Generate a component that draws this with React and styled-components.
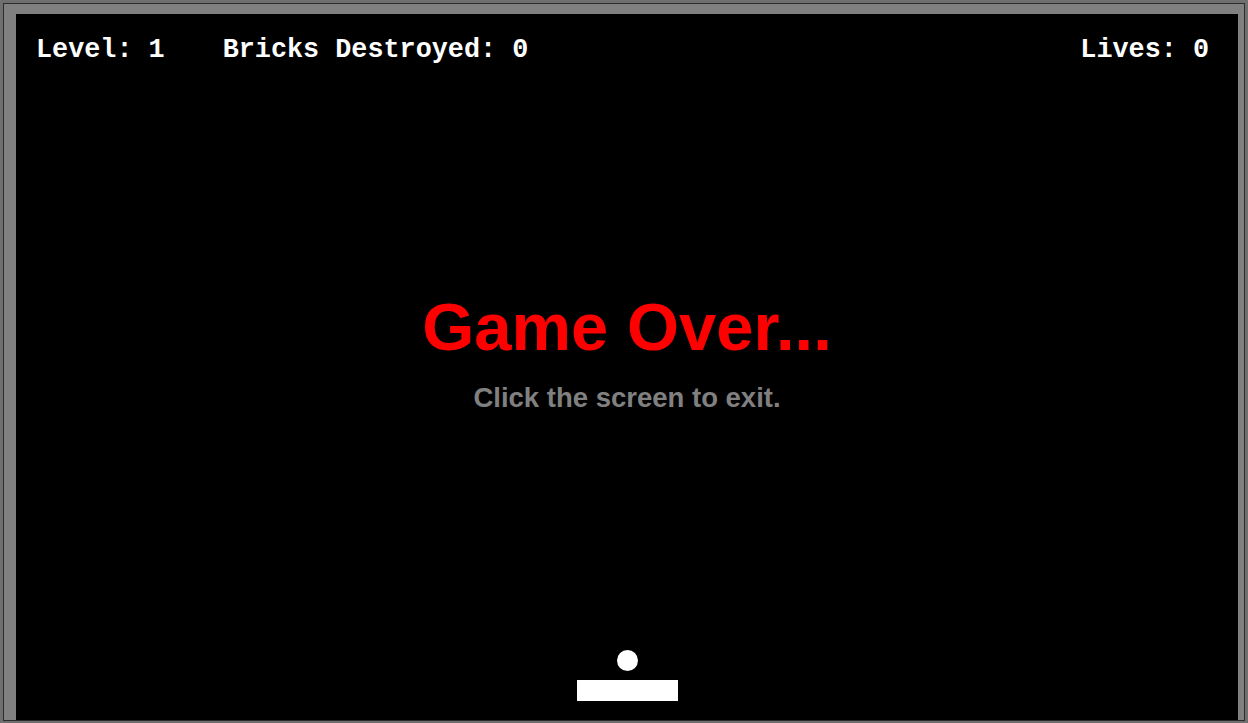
import React from 'react';
import styled, { createGlobalStyle } from 'styled-components';

const GlobalStyle = createGlobalStyle`
    html, body {
        margin : 0;
        padding : 0;
        background : #6f6f6f;
        overflow : hidden;
    }
`;

const Frame = styled.div`
    box-sizing : border-box;
    width : 1242px;
    height : 718px;
    margin : 3px 0 0 3px;
    border : 1px solid #2c2c2c;
    background : #808080;
    padding : 10px 6px 0 12px;
    display : flex;
`;

const Board = styled.div`
    position : relative;
    flex : 1;
    background : #000;
    display : flex;
    flex-direction : column;
    align-items : center;
    cursor : pointer;
`;

const Hud = styled.div`
    align-self : stretch;
    display : flex;
    align-items : center;
    gap : 58px;
    padding : 21px 29px 0 20px;
    height : 30px;
    font-family : "Liberation Mono", "Courier New", monospace;
    font-weight : bold;
    font-size : 26.8px;
    line-height : 30px;
    color : #fff;
    white-space : pre;
    &>:last-child{
        margin-left : auto;
    }
`;

const Message = styled.div`
    margin-top : 228px;
    display : flex;
    flex-direction : column;
    align-items : center;
    gap : 24px;
    font-family : "Liberation Sans", Arial, sans-serif;
    font-weight : bold;
`;

const Title = styled.h1`
    margin : 0;
    font-size : 67px;
    line-height : 67px;
    color : #ff0000;
`;

const Hint = styled.p`
    margin : 0;
    font-size : 27.5px;
    line-height : 28px;
    color : #808080;
`;

const Ball = styled.div(({ $x, $y, $size }) => `
    position : absolute;
    left : ${$x}px;
    top : ${$y}px;
    width : ${$size}px;
    height : ${$size}px;
    border-radius : 50%;
    background : #fff;
`);

const Paddle = styled.div(({ $x, $y, $width }) => `
    position : absolute;
    left : ${$x}px;
    top : ${$y}px;
    width : ${$width}px;
    height : 21px;
    background : #fff;
`);

const App = () => {
    const game = { level: 1, destroyed: 0, lives: 0 };
    const ball = { x: 601, y: 636, size: 21 };
    const paddle = { x: 561, y: 666, width: 101 };
    return (
        <>
            <GlobalStyle />
            <Frame>
                <Board>
                    <Hud>
                        <span>Level: {game.level}</span>
                        <span>Bricks Destroyed: {game.destroyed}</span>
                        <span>Lives: {game.lives}</span>
                    </Hud>
                    <Message>
                        <Title>Game Over...</Title>
                        <Hint>Click the screen to exit.</Hint>
                    </Message>
                    <Ball $x={ball.x} $y={ball.y} $size={ball.size} />
                    <Paddle $x={paddle.x} $y={paddle.y} $width={paddle.width} />
                </Board>
            </Frame>
        </>
    );
};

export default App;
